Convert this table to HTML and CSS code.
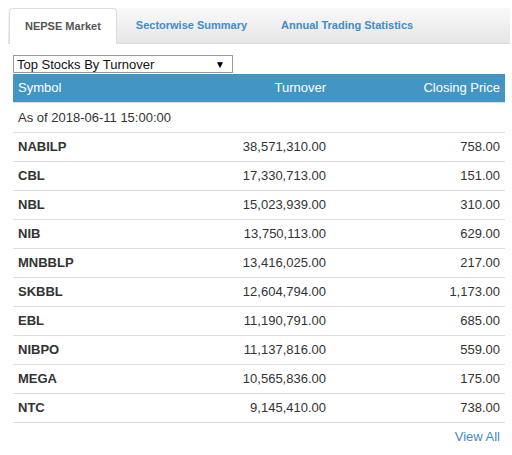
FILE: index.html
```html
<!DOCTYPE html>
<html>
<head>
<meta charset="utf-8">
<link rel="stylesheet" href="styles.css">
</head>
<body>
<div class="widget">
  <ul class="tabs">
    <li class="tab active">NEPSE Market</li>
    <li class="tab">Sectorwise Summary</li>
    <li class="tab">Annual Trading Statistics</li>
  </ul>
  <div class="pane">
    <div class="select"><span>Top Stocks By Turnover</span><span class="arrow">▼</span></div>
    <table class="stocks">
      <colgroup><col class="c1"><col class="c2"><col class="c3"></colgroup>
      <thead>
        <tr><th class="left">Symbol</th><th>Turnover</th><th>Closing Price</th></tr>
      </thead>
      <tbody>
        <tr><td class="left asof" colspan="3">As of 2018-06-11 15:00:00</td></tr>
        <tr><th class="left">NABILP</th><td>38,571,310.00</td><td>758.00</td></tr>
        <tr><th class="left">CBL</th><td>17,330,713.00</td><td>151.00</td></tr>
        <tr><th class="left">NBL</th><td>15,023,939.00</td><td>310.00</td></tr>
        <tr><th class="left">NIB</th><td>13,750,113.00</td><td>629.00</td></tr>
        <tr><th class="left">MNBBLP</th><td>13,416,025.00</td><td>217.00</td></tr>
        <tr><th class="left">SKBBL</th><td>12,604,794.00</td><td>1,173.00</td></tr>
        <tr><th class="left">EBL</th><td>11,190,791.00</td><td>685.00</td></tr>
        <tr><th class="left">NIBPO</th><td>11,137,816.00</td><td>559.00</td></tr>
        <tr><th class="left">MEGA</th><td>10,565,836.00</td><td>175.00</td></tr>
        <tr class="last"><th class="left">NTC</th><td>9,145,410.00</td><td>738.00</td></tr>
      </tbody>
    </table>
    <div class="more"><a href="#">View All</a></div>
  </div>
</div>
</body>
</html>
```
FILE: styles.css
```css
html, body { margin: 0; padding: 0; background: #fff; }
body {
  padding: 8px 0 0 8px;
  font-family: "Liberation Sans", Arial, sans-serif;
  font-size: 13px;
  color: #333;
}
.widget { width: 504px; }
.tabs {
  list-style: none;
  margin: 0;
  padding: 0;
  height: 36px;
  width: 502px;
  display: flex;
  background: linear-gradient(#f9f9f9, #e6e6e6);
  border-bottom: 1px solid #dcdcdc;
  box-sizing: border-box;
}
.tab {
  padding: 0 15px;
  margin-right: 4px;
  line-height: 35px;
  font-size: 11px;
  font-weight: bold;
  color: #428bca;
}
.tab.active {
  margin-left: 1px;
  background: #fff;
  color: #555;
  border: 1px solid #ddd;
  border-bottom: none;
  border-radius: 4px 4px 0 0;
  height: 36px;
  line-height: 35px;
  box-sizing: border-box;
}
.pane { padding: 11px 0 0 5px; }
.select {
  width: 220px;
  height: 18px;
  box-sizing: border-box;
  border: 1px solid #9a9a9a;
  display: flex;
  justify-content: space-between;
  align-items: center;
  padding: 0 7px 0 3px;
  font-size: 13px;
  color: #111;
  margin-bottom: 1px;
}
.arrow { font-size: 10px; color: #000; }
.stocks {
  width: 492px;
  border-collapse: collapse;
  table-layout: fixed;
}
.c1 { width: 160px; }
.c2 { width: 158px; }
.c3 { width: 174px; }
.stocks th, .stocks td {
  padding: 5px 5px;
  line-height: 18px;
  text-align: right;
}
.stocks .left { text-align: left; }
.stocks thead th {
  background: #4396c4;
  color: #fff;
  font-weight: normal;
  height: 28px;
  box-sizing: border-box;
  padding: 4px 5px;
  border-bottom: 1px solid #ddd;
}
.stocks tbody th { font-weight: bold; color: #333; }
.stocks tbody tr td, .stocks tbody tr th { border-top: 1px solid #ddd; }
.stocks tbody tr:first-child td { border-top: none; padding-top: 6px; }
.stocks tbody tr.last th, .stocks tbody tr.last td { border-bottom: 1px solid #ddd; }
.more {
  width: 492px;
  text-align: right;
  padding: 6px 0 0 0;
  box-sizing: border-box;
}
.more a {
  color: #428bca;
  text-decoration: none;
  margin-right: 5px;
  font-size: 13px;
}
```
